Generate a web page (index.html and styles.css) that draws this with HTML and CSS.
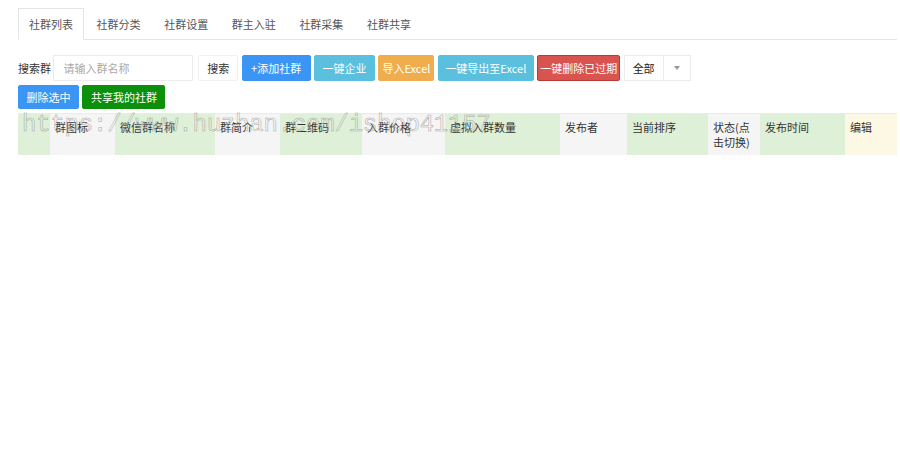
FILE: index.html
```html
<!DOCTYPE html>
<html lang="zh">
<head>
<meta charset="utf-8">
<title>社群列表</title>
<link rel="stylesheet" href="styles.css">
</head>
<body>
<div class="page">
  <ul class="tabs">
    <li class="tab active">社群列表</li>
    <li class="tab">社群分类</li>
    <li class="tab">社群设置</li>
    <li class="tab">群主入驻</li>
    <li class="tab">社群采集</li>
    <li class="tab">社群共享</li>
  </ul>

  <div class="toolbar">
    <span class="label">搜索群</span>
    <input class="search-input" type="text" placeholder="请输入群名称">
    <button class="btn btn-default w-search">搜索</button>
    <button class="btn btn-blue w-add">+添加社群</button>
    <button class="btn btn-info w-ent">一键企业</button>
    <button class="btn btn-orange w-import">导入Excel</button>
    <button class="btn btn-info w-export">一键导出至Excel</button>
    <button class="btn btn-red w-del">一键删除已过期</button>
    <div class="select">
      <span class="select-value">全部</span>
      <span class="select-arrow"><span class="caret"></span></span>
    </div>
  </div>

  <div class="toolbar toolbar-second">
    <button class="btn btn-blue w-delsel">删除选中</button>
    <button class="btn btn-green w-share">共享我的社群</button>
  </div>

  <div class="table-wrap">
    <table class="list">
      <colgroup>
        <col class="c1"><col class="c2"><col class="c3"><col class="c4"><col class="c5"><col class="c6">
        <col class="c7"><col class="c8"><col class="c9"><col class="c10"><col class="c11"><col class="c12">
      </colgroup>
      <thead>
        <tr>
          <th class="success"></th>
          <th class="active">群图标</th>
          <th class="success">微信群名称</th>
          <th class="active">群简介</th>
          <th class="success">群二维码</th>
          <th class="active">入群价格</th>
          <th class="success">虚拟入群数量</th>
          <th class="active">发布者</th>
          <th class="success">当前排序</th>
          <th class="active">状态(点击切换)</th>
          <th class="success">发布时间</th>
          <th class="warning">编辑</th>
        </tr>
      </thead>
    </table>
    <span class="watermark">https://www.huzhan.com/ishop41157</span>
  </div>
</div>
</body>
</html>
```

FILE: styles.css
```css
* { box-sizing: border-box; }

html, body {
  margin: 0;
  padding: 0;
  background: #fff;
}

body {
  font-family: "Noto Sans CJK SC", "Noto Sans", "Liberation Sans", sans-serif;
  font-size: 11px;
  color: #333;
}

.page {
  padding: 8px 3px 0 18px;
}

/* Tabs */
.tabs {
  list-style: none;
  margin: 0;
  padding: 0;
  display: flex;
  border-bottom: 1px solid #e4e4e4;
  height: 32px;
}

.tab {
  height: 32px;
  line-height: 30px;
  padding: 0 10px;
  margin-right: 1.6px;
  border: 1px solid transparent;
  color: #555;
  font-size: 11px;
}

.tab.active {
  background: #fff;
  border-color: #e4e4e4;
  border-bottom-color: #fff;
}

/* Toolbar */
.toolbar {
  display: flex;
  align-items: center;
  gap: 3.4px;
  margin-top: 15px;
  height: 26px;
}

.toolbar-second {
  margin-top: 4px;
  height: 24px;
}

.label {
  font-size: 11px;
  color: #333;
  width: 32px;
  white-space: nowrap;
}

.search-input {
  width: 140px;
  height: 26px;
  border: 1px solid #ececec;
  padding: 0 9px;
  font-family: inherit;
  font-size: 11px;
  color: #333;
  outline: none;
  margin-right: 1.5px;
}

.search-input::placeholder {
  color: #a9a9a9;
}

.btn {
  height: 26px;
  padding: 0;
  border: 1px solid transparent;
  border-radius: 2px;
  font-family: inherit;
  font-size: 11px;
  color: #fff;
  white-space: nowrap;
  text-align: center;
  cursor: pointer;
}

.toolbar-second .btn {
  height: 24px;
}

.btn-default {
  background: #fff;
  border-color: #f0f0f0;
  color: #333;
}

.btn-blue {
  background: #3b95f4;
  border-color: #3b95f4;
}

.btn-info {
  background: #5bc0de;
  border-color: #5bc0de;
}

.btn-orange {
  background: #f0ad4e;
  border-color: #f0ad4e;
}

.btn-red {
  background: #d9534f;
  border-color: #b83b37;
}

.btn-green {
  background: #0c900c;
  border-color: #0c900c;
}

.w-search { width: 40px; }
.w-add { width: 69px; }
.w-ent { width: 61px; }
.w-import { width: 56px; }
.w-export { width: 96px; }
.w-del { width: 83px; }
.w-delsel { width: 61px; }
.w-share { width: 83px; }

.select {
  display: flex;
  width: 67px;
  height: 26px;
  border: 1px solid #ececec;
  background: #fff;
}

.select-value {
  flex: 1;
  line-height: 24px;
  padding-left: 8px;
  color: #222;
}

.select-arrow {
  width: 27px;
  border-left: 1px solid #ececec;
  display: flex;
  align-items: center;
  justify-content: center;
}

.caret {
  width: 0;
  height: 0;
  border-left: 3.5px solid transparent;
  border-right: 3.5px solid transparent;
  border-top: 4px solid #999;
}

/* Table */
.table-wrap {
  position: relative;
  margin-top: 4px;
}

.list {
  width: 879px;
  table-layout: fixed;
  border-collapse: collapse;
  border-top: 1px solid #ebebeb;
}

.c1 { width: 32px; }
.c2 { width: 65px; }
.c3 { width: 100px; }
.c4 { width: 65px; }
.c5 { width: 82px; }
.c6 { width: 83px; }
.c7 { width: 115px; }
.c8 { width: 67px; }
.c9 { width: 81px; }
.c10 { width: 52px; }
.c11 { width: 85px; }
.c12 { width: 52px; }

.list th {
  height: 41px;
  padding: 6px 5px 4px 5px;
  text-align: left;
  vertical-align: top;
  font-weight: normal;
  font-size: 11px;
  line-height: 15px;
  color: #333;
}

.success { background: #dff0d8; }
.active { background: #f5f5f5; }
.warning { background: #fcf8e3; }

.watermark {
  position: absolute;
  left: 4px;
  top: 0;
  font-family: "Liberation Mono", monospace;
  font-size: 24px;
  letter-spacing: -0.2px;
  line-height: 24px;
  color: transparent;
  -webkit-text-stroke: 0.5px #a8a8a8;
  white-space: nowrap;
  pointer-events: none;
}
```
